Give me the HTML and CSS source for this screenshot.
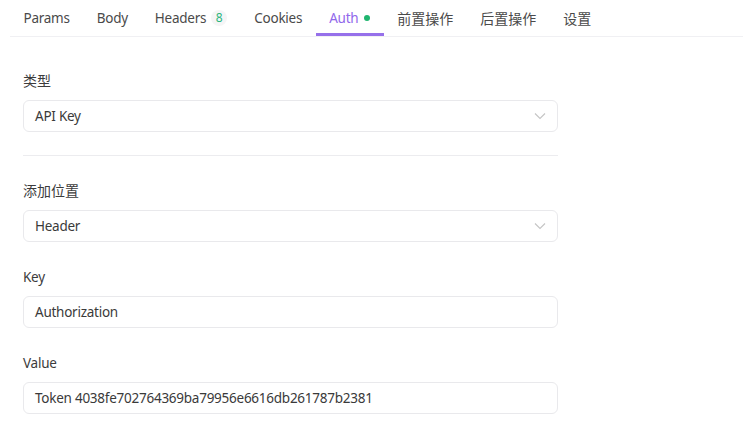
FILE: index.html
```html
<!DOCTYPE html>
<html lang="zh">
<head>
<meta charset="utf-8">
<link rel="stylesheet" href="styles.css">
</head>
<body>
<div class="tabs">
  <div class="tab">Params</div>
  <div class="tab">Body</div>
  <div class="tab">Headers <span class="badge">8</span></div>
  <div class="tab">Cookies</div>
  <div class="tab active">Auth <span class="dot"></span></div>
  <div class="tab cjk">前置操作</div>
  <div class="tab cjk">后置操作</div>
  <div class="tab cjk">设置</div>
</div>
<div class="form">
  <div class="item">
    <div class="label cjk">类型</div>
    <div class="control select">
      <span>API Key</span>
      <svg class="chev" width="12" height="8" viewBox="0 0 12 8"><path d="M1 1.5 L6 6.5 L11 1.5" fill="none" stroke="#c4c4c4" stroke-width="1.1"/></svg>
    </div>
  </div>
  <div class="divider"></div>
  <div class="item">
    <div class="label cjk">添加位置</div>
    <div class="control select">
      <span>Header</span>
      <svg class="chev" width="12" height="8" viewBox="0 0 12 8"><path d="M1 1.5 L6 6.5 L11 1.5" fill="none" stroke="#c4c4c4" stroke-width="1.1"/></svg>
    </div>
  </div>
  <div class="item">
    <div class="label">Key</div>
    <div class="control">Authorization</div>
  </div>
  <div class="item">
    <div class="label">Value</div>
    <div class="control">Token 4038fe702764369ba79956e6616db261787b2381</div>
  </div>
</div>
</body>
</html>
```
FILE: styles.css
```css
* { box-sizing: border-box; }
body {
  margin: 0;
  background: #fff;
  font-family: "Noto Sans", "Noto Sans CJK SC", sans-serif;
  font-size: 13.5px;
  letter-spacing: -0.25px;
  color: #3c3c3c;
}
.cjk {
  font-size: 14px;
  letter-spacing: 0;
}
.tabs {
  display: flex;
  margin-left: 10px;
  height: 37px;
  border-bottom: 1px solid #f0f0f3;
}
.tab {
  display: flex;
  align-items: center;
  padding: 0 13.5px;
  height: 36px;
  color: #4a4a4a;
  border-bottom: 3px solid transparent;
  padding-top: 2px;
  white-space: nowrap;
}
.tab.active {
  color: #9168eb;
  border-bottom-color: #9670ea;
}
.badge {
  display: inline-flex;
  align-items: center;
  justify-content: center;
  width: 16px;
  height: 16px;
  margin-left: 5px;
  border-radius: 50%;
  background: #f5f5f6;
  color: #2bb57e;
  font-size: 12px;
  letter-spacing: 0;
}
.dot {
  display: inline-block;
  width: 6px;
  height: 6px;
  border-radius: 50%;
  background: #1fb56f;
  margin-left: 6px;
}
.form {
  width: 558px;
  padding: 34px 0 0 23px;
}
.item {
  display: flex;
  flex-direction: column;
  gap: 9px;
  margin-bottom: 25px;
}
.label {
  line-height: 20px;
  color: #3c3c3c;
}
.control {
  height: 32px;
  border: 1px solid #e9e9ec;
  border-radius: 6px;
  padding: 0 11px;
  display: flex;
  align-items: center;
  color: #3a3a3a;
}
.select {
  justify-content: space-between;
}
.divider {
  height: 1px;
  background: #ececef;
  margin: -2px 0 25px;
}
```
